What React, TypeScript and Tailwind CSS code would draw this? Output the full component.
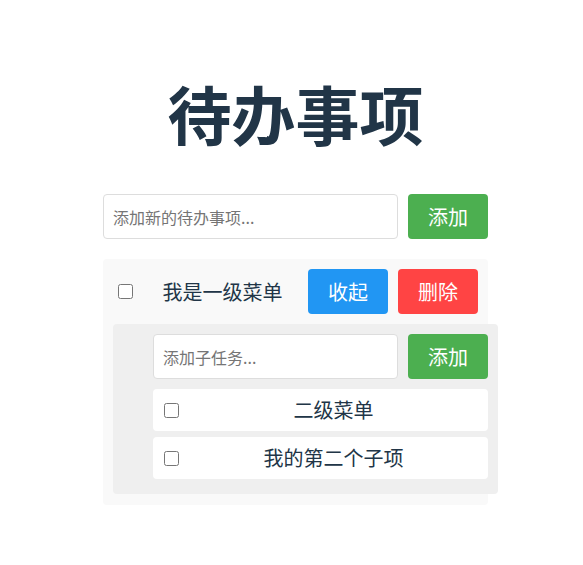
import { useState } from 'react';

type SubItem = { id: number; text: string; done: boolean };

export default function App() {
  const [subs] = useState<SubItem[]>([
    { id: 1, text: '二级菜单', done: false },
    { id: 2, text: '我的第二个子项', done: false },
  ]);

  return (
    <div className="min-h-[565px] bg-white text-[#213547] font-['Noto_Sans_CJK_SC','Noto_Sans',sans-serif]">
      <div className="ml-[103px] w-[385px] pt-[66px]">
        {/* Title */}
        <h1 className="text-center text-[64px] leading-[92px] font-bold text-[#213547]">待办事项</h1>

        {/* New todo */}
        <div className="mt-[36px] flex gap-[10px]">
          <input
            className="h-[45px] flex-1 rounded-[4px] border border-[#ddd] px-[9px] text-[16px] outline-none placeholder:text-[#757575]"
            placeholder="添加新的待办事项..."
          />
          <button className="h-[45px] w-[80px] rounded-[4px] bg-[#4caf50] text-[20px] text-white">添加</button>
        </div>

        {/* Todo list */}
        <div className="mt-[20px] rounded-[4px] bg-[#f9f9f9] pt-[10px] pb-[11px] pl-[10px]">
          <div className="flex items-center pr-[10px]">
            <input type="checkbox" className="ml-[5px] h-[15px] w-[15px]" />
            <span className="flex-1 pl-[17px] pr-[13px] text-center text-[20px]">我是一级菜单</span>
            <button className="h-[45px] w-[80px] rounded-[4px] bg-[#2196f3] text-[20px] text-white">收起</button>
            <button className="ml-[10px] h-[45px] w-[80px] rounded-[4px] bg-[#ff4444] text-[20px] text-white">删除</button>
          </div>

          {/* Sub tasks */}
          <div className="mt-[10px] mr-[-10px] rounded-[4px] bg-[#efefef] pt-[10px] pb-[15px] pl-[40px] pr-[10px]">
            <div className="flex gap-[10px]">
              <input
                className="h-[45px] flex-1 rounded-[4px] border border-[#ddd] bg-white px-[9px] text-[16px] outline-none placeholder:text-[#757575]"
                placeholder="添加子任务..."
              />
              <button className="h-[45px] w-[80px] rounded-[4px] bg-[#4caf50] text-[20px] text-white">添加</button>
            </div>
            <ul className="mt-[10px] flex flex-col gap-[6px]">
              {subs.map((s) => (
                <li key={s.id} className="flex h-[42px] items-center rounded-[4px] bg-white px-[10px]">
                  <input type="checkbox" defaultChecked={s.done} className="ml-[1px] h-[15px] w-[15px]" />
                  <span className="flex-1 pl-[10px] text-center text-[20px]">{s.text}</span>
                </li>
              ))}
            </ul>
          </div>
        </div>
      </div>
    </div>
  );
}
